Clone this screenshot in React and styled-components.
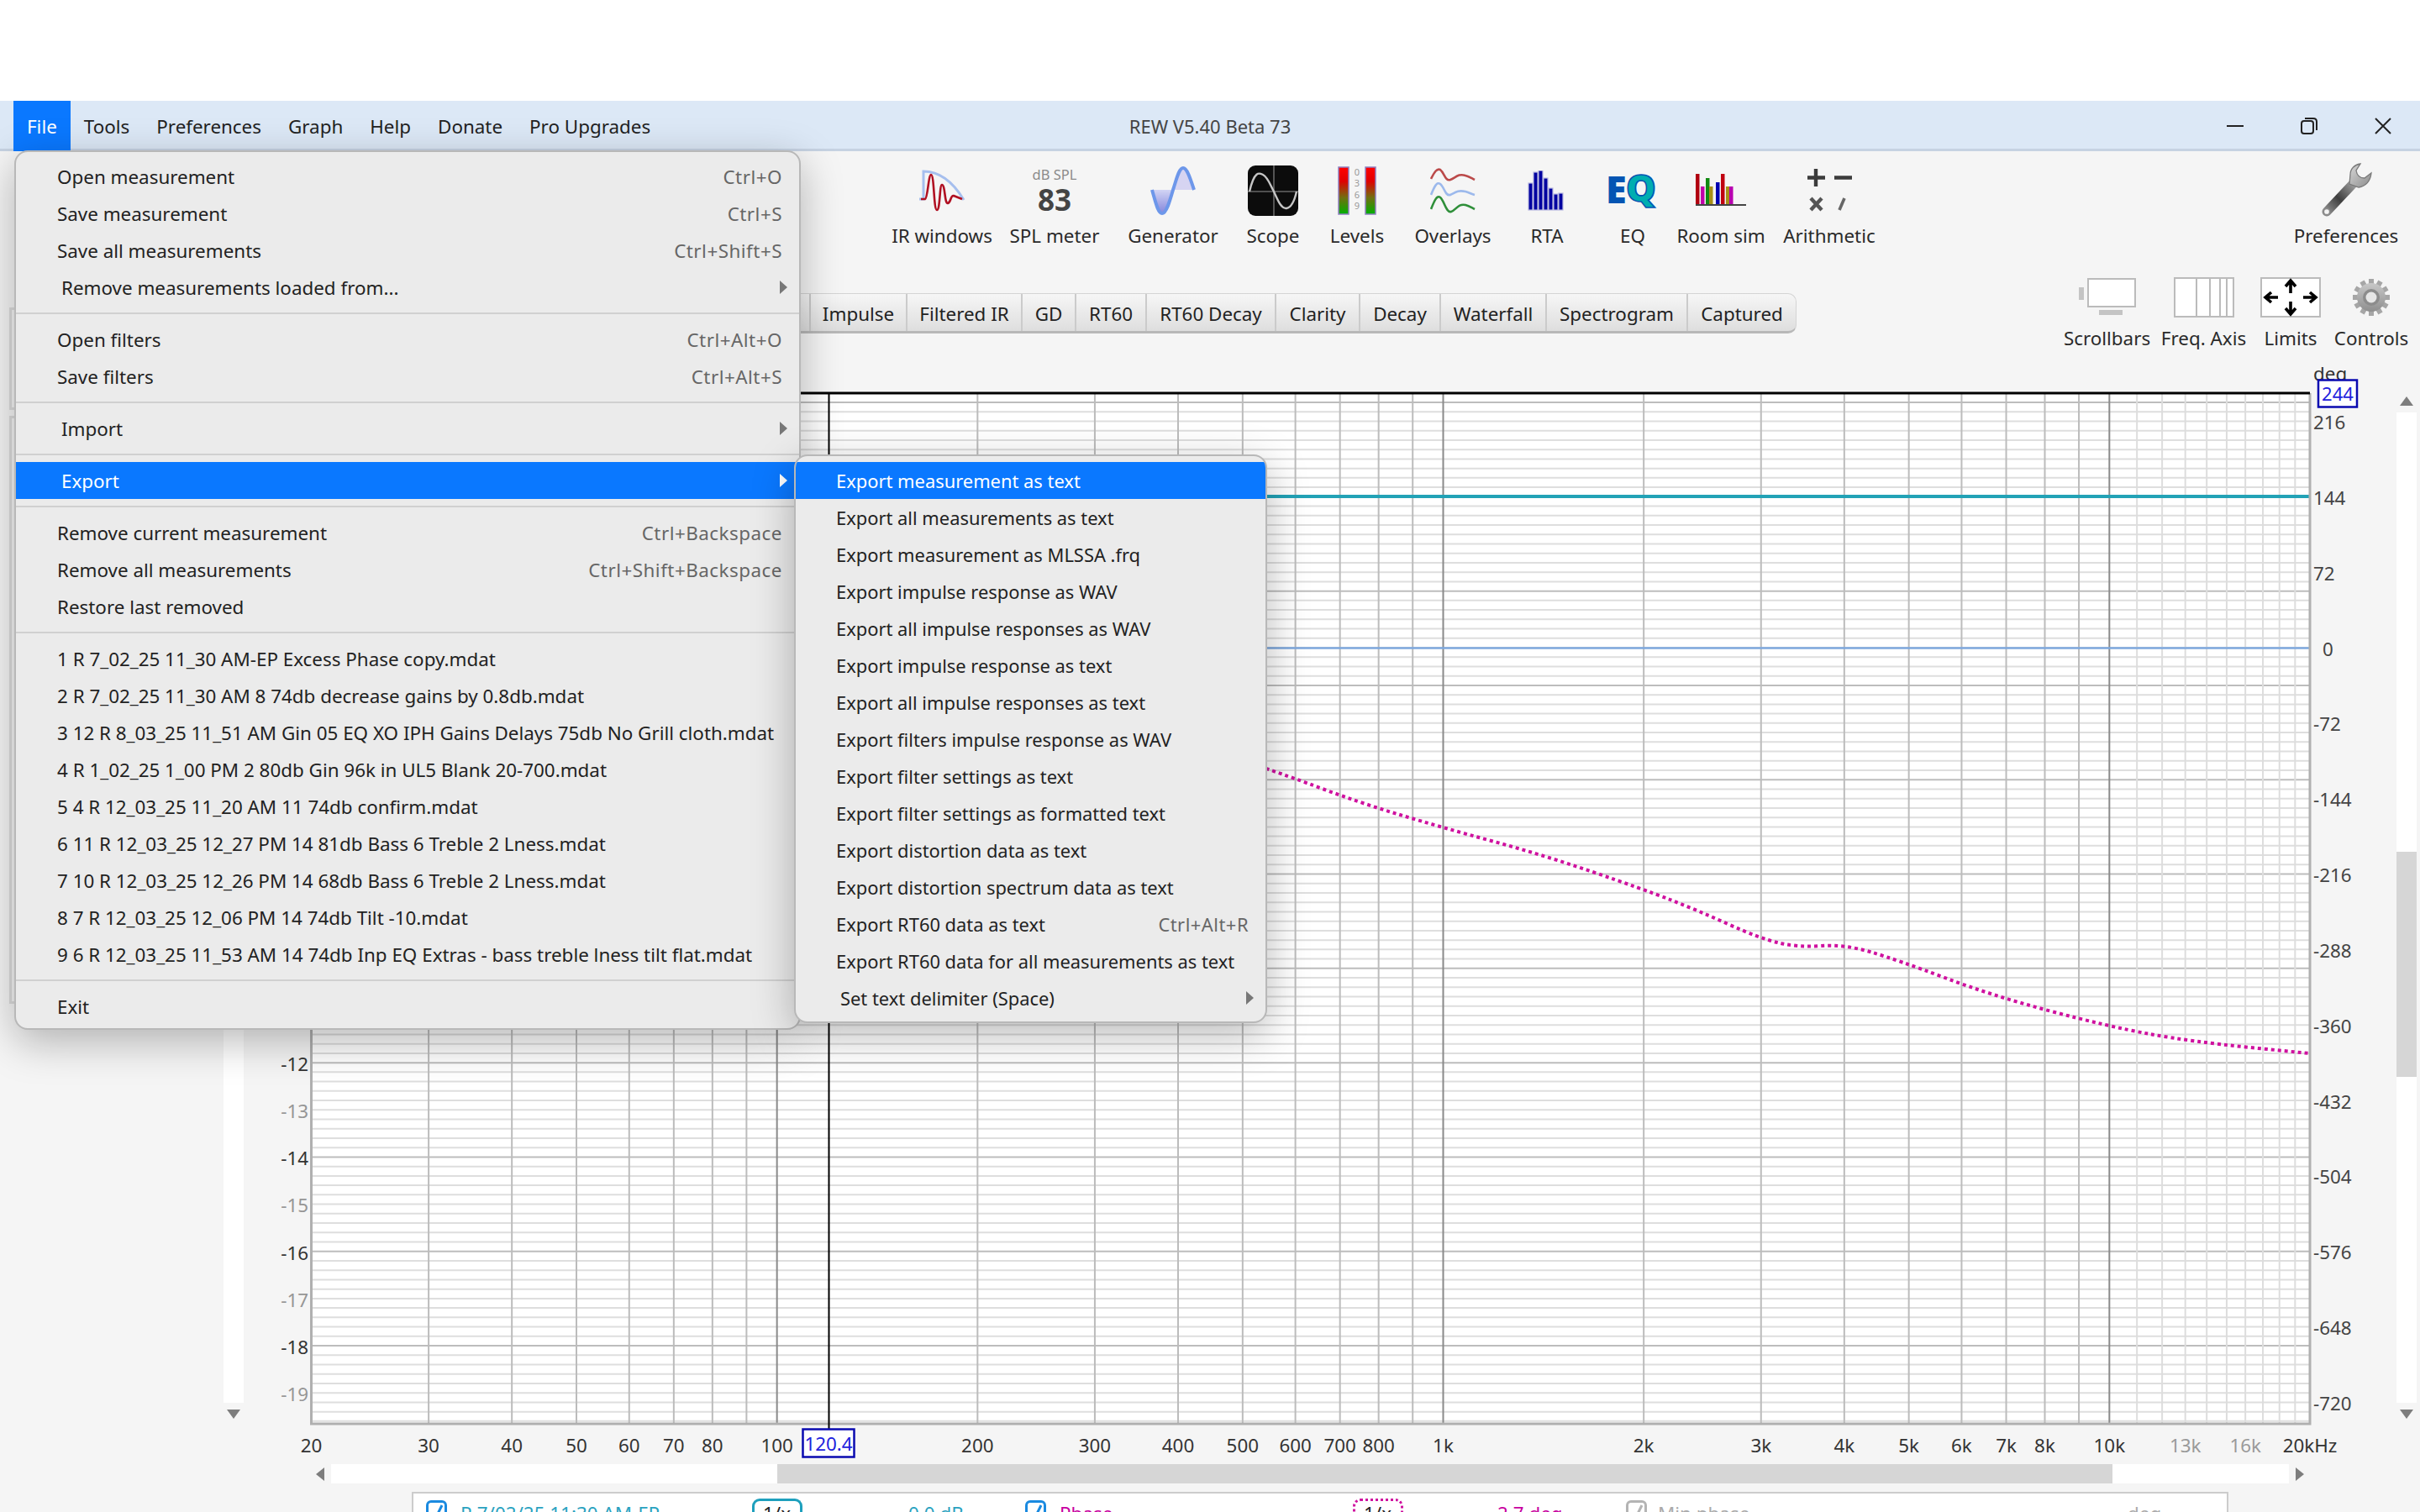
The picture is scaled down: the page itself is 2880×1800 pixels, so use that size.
import React from "react";
import styled, { createGlobalStyle } from "styled-components";

const GlobalStyle = createGlobalStyle`
  html, body { margin: 0; padding: 0; background: #fff; }
  * { box-sizing: border-box; }
`;

const FONT = `"Noto Sans", "Open Sans", sans-serif`;

const Page = styled.div`
  position: relative;
  width: 2880px;
  height: 1800px;
  overflow: hidden;
  display: flex;
  flex-direction: column;
  background: #fff;
  font-family: ${FONT};
  font-size: 22.4px;
  color: #222;
`;
const TopBlank = styled.div`
  height: 120px;
  flex: none;
`;
const TitleBar = styled.div`
  height: 60px;
  flex: none;
  display: grid;
  grid-template-columns: 1fr auto 1fr;
  align-items: center;
  background: #dce8f6;
  border-bottom: 3px solid #c6d2e2;
`;
const MenuBar = styled.div`
  display: flex;
  height: 100%;
  padding-left: 16px;
`;
const MenuBarItem = styled.div`
  display: flex;
  align-items: center;
  height: 60px;
  padding: 0 16px;
  color: ${(p) => (p.$active ? "#fff" : "#222")};
  background: ${(p) => (p.$active ? "#0a78ff" : "transparent")};
`;
const Title = styled.div`
  color: #444;
  font-size: 22px;
`;
const WindowButtons = styled.div`
  display: flex;
  justify-content: flex-end;
  padding-right: 33px;
  gap: 66px;
`;
const Workspace = styled.div`
  flex: 1;
  display: flex;
  background: #f5f5f5;
  min-height: 0;
`;
const Sidebar = styled.div`
  width: 266px;
  flex: none;
  padding: 186px 0 0 11px;
  display: flex;
  flex-direction: column;
  gap: 7px;
`;
const SidePanel = styled.div`
  width: 60px;
  height: ${(p) => p.$h}px;
  border: 3px solid #dcdcdc;
`;
const Main = styled.div`
  flex: 1;
  min-width: 0;
  display: flex;
  flex-direction: column;
`;
const ToolRow = styled.div`
  height: 150px;
  flex: none;
  display: flex;
  padding: 13px 26px 0 790px;
`;
const Tool = styled.div`
  width: ${(p) => p.$w}px;
  flex: none;
  display: flex;
  flex-direction: column;
  align-items: center;
  margin-left: ${(p) => (p.$push ? "auto" : "0")};
`;
const IconSlot = styled.div`
  height: ${(p) => p.$h}px;
  display: flex;
  flex-direction: column;
  align-items: center;
  justify-content: center;
`;
const ToolLabel = styled.div`
  height: 32px;
  line-height: 32px;
  margin-top: ${(p) => p.$gap}px;
  white-space: nowrap;
  color: #2a2a2a;
`;
const SplCaption = styled.div`
  color: #8a8a8a;
  font-size: 16.5px;
  line-height: 18px;
`;
const SplValue = styled.div`
  margin-top: 3px;
  color: #444;
  font-size: 35px;
  font-weight: 700;
  line-height: 36px;
`;
const SecondRow = styled.div`
  height: 110px;
  flex: none;
  display: flex;
  align-items: flex-start;
  padding-right: 8px;
`;
const TabStrip = styled.div`
  display: flex;
  height: 48px;
  margin: 19px 0 0 514px;
  border-radius: 0 10px 10px 0;
  border: 1px solid #d4d4d4;
  border-bottom: 3px solid #b8b8b8;
  border-left: 0;
  background: linear-gradient(#f6f6f6, #dedede);
`;
const TabItem = styled.div`
  width: ${(p) => p.$w}px;
  display: flex;
  align-items: center;
  justify-content: center;
  padding-top: 3px;
  white-space: nowrap;
  border-right: ${(p) => (p.$last ? "0" : "2px solid #cbcbcb")};
`;
const SmallTools = styled.div`
  margin-left: auto;
  display: flex;
`;
const ChartRow = styled.div`
  height: 1300px;
  flex: none;
  display: flex;
`;
const VScroll = styled.div`
  width: 24px;
  flex: none;
  display: flex;
  flex-direction: column;
`;
const ArrowSlot = styled.div`
  height: ${(p) => p.$h}px;
  flex: none;
  display: flex;
  justify-content: center;
  align-items: ${(p) => (p.$down ? "flex-start" : "flex-end")};
  padding: 8px 0;
`;
const TriangleV = styled.div`
  width: 0;
  height: 0;
  border-left: 8px solid transparent;
  border-right: 8px solid transparent;
  ${(p) => (p.$down ? "border-top: 11px solid #7d7d7d;" : "border-bottom: 11px solid #7d7d7d;")}
`;
const VTrack = styled.div`
  flex: 1;
  background: #fff;
`;
const VThumb = styled.div`
  margin-top: ${(p) => p.$top}px;
  height: ${(p) => p.$h}px;
  background: #d6d6d6;
`;
const ChartSvg = styled.svg`
  display: block;
  flex: none;
  overflow: visible;
  font-family: ${FONT};
  font-size: 22.4px;
`;
const EqSvg = styled.svg`
  overflow: visible;
  font-family: ${FONT};
  font-weight: 900;
  font-size: 45px;
`;
const HScrollRow = styled.div`
  height: 36px;
  flex: none;
  display: flex;
  align-items: flex-start;
  padding: 3px 0 0 110px;
  gap: 8px;
`;
const TriangleH = styled.div`
  width: 0;
  height: 0;
  margin-top: 4px;
  border-top: 8px solid transparent;
  border-bottom: 8px solid transparent;
  ${(p) => (p.$right ? "border-left: 10px solid #7d7d7d;" : "border-right: 10px solid #7d7d7d;")}
`;
const HTrack = styled.div`
  width: 2330px;
  height: 23px;
  background: #fff;
`;
const HThumb = styled.div`
  width: 1589px;
  height: 23px;
  margin-left: 531px;
  background: #d6d6d6;
`;
const BottomPanel = styled.div`
  flex: 1;
  width: 2162px;
  margin-left: 224px;
  display: flex;
  align-items: flex-start;
  overflow: hidden;
  padding: 8px 0 0 15px;
  background: #fff;
  border: 2px solid #cccccc;
  border-bottom: 0;
`;
const LegendCheck = styled.div`
  width: ${(p) => p.$w}px;
  flex: none;
  display: flex;
  align-items: flex-start;
  gap: ${(p) => p.$gap}px;
  color: ${(p) => p.$color};
  white-space: nowrap;
`;
const CheckBox = styled.div`
  width: 25px;
  height: 30px;
  flex: none;
  border: 3px solid ${(p) => p.$color};
  border-radius: 6px;
  background: #fff;
`;
const LegendText = styled.div`
  line-height: 32px;
`;
const LegendValue = styled.div`
  width: ${(p) => p.$w}px;
  flex: none;
  padding-left: ${(p) => p.$pad}px;
  color: ${(p) => p.$color};
  line-height: 32px;
  white-space: nowrap;
`;
const SmoothSlot = styled.div`
  position: relative;
  width: ${(p) => p.$w}px;
  flex: none;
  margin-top: -2px;
  display: flex;
  justify-content: center;
  &::before {
    content: "";
    position: absolute;
    left: 0;
    right: 0;
    top: 16px;
    border-top: 3px ${(p) => p.$line} ${(p) => p.$color};
  }
`;
const SmoothTab = styled.div`
  position: relative;
  width: 60px;
  height: 40px;
  border: 3px ${(p) => p.$line} ${(p) => p.$color};
  border-bottom: 0;
  border-radius: 9px 9px 0 0;
  background: #fff;
  text-align: center;
  line-height: 30px;
  color: #222;
`;
const MenuPanel = styled.div`
  position: absolute;
  left: ${(p) => p.$x}px;
  top: ${(p) => p.$y}px;
  width: ${(p) => p.$w}px;
  height: ${(p) => p.$h}px;
  padding-top: ${(p) => p.$top}px;
  font-size: ${(p) => p.$size}px;
  background: #ebebeb;
  border: 2px solid #b8b8b8;
  border-radius: 16px;
  box-shadow: 0 14px 50px rgba(0, 0, 0, 0.28);
  overflow: hidden;
`;
const MenuItem = styled.div`
  position: relative;
  height: 44px;
  display: flex;
  align-items: center;
  justify-content: space-between;
  padding: 0 20px 0 ${(p) => p.$left}px;
  white-space: nowrap;
  color: ${(p) => (p.$active ? "#fff" : "#222")};
  background: ${(p) => (p.$active ? "#0a78ff" : "transparent")};
`;
const Shortcut = styled.span`
  color: #666;
  letter-spacing: 0.5px;
`;
const MenuArrow = styled.span`
  position: absolute;
  right: 14px;
  top: 14px;
  width: 0;
  height: 0;
  border-top: 8px solid transparent;
  border-bottom: 8px solid transparent;
  border-left: 9px solid ${(p) => (p.$active ? "#fff" : "#777")};
`;
const MenuSeparator = styled.div`
  height: 2px;
  margin: 8px 0;
  background: #d0d0d0;
`;

const IrIcon = () => (
  <svg width="56" height="54" viewBox="0 0 56 54" fill="none">
    <path d="M1 37H6V4C26 4 42 18 54 38" stroke="#a6bfee" strokeWidth="3" />
    <path d="M3 37H8C11 36 12 8 15 8C19 8 18 50 22 50C26 50 25 20 28 20C32 20 31 43 35 42C39 41 38 32 42 33L52 37" stroke="#b01022" strokeWidth="2.6" />
  </svg>
);
const GeneratorIcon = () => (
  <svg width="54" height="58" viewBox="0 0 54 58" fill="none">
    <defs>
      <linearGradient id="genLow" x1="0" y1="0" x2="0" y2="1">
        <stop offset="0" stopColor="#d2d4f4" />
        <stop offset="1" stopColor="#8486dc" />
      </linearGradient>
    </defs>
    <path d="M2 28H27C23 42 19 56 14 56C9 56 6 42 2 28Z" fill="url(#genLow)" />
    <path d="M27 28H52C48 16 44 2 39 2C34 2 31 16 27 28Z" fill="#d6d4f2" />
    <path d="M2 28C6 42 9 56 14 56C19 56 23 42 27 28C31 16 34 2 39 2C44 2 48 16 52 28" stroke="#6d97ea" strokeWidth="4" />
  </svg>
);
const ScopeIcon = () => (
  <svg width="60" height="60" viewBox="0 0 60 60" fill="none">
    <rect width="60" height="60" rx="9" fill="#0c0c0c" />
    <path d="M0 31H60M31 0V60" stroke="#666" strokeWidth="1.6" />
    <path d="M2 31C8 5 14 9 18 11C24 14 27 24 31 31C36 42 40 52 46 51C52 50 56 40 58 31" stroke="#c6c6c6" strokeWidth="2.4" />
  </svg>
);
const LevelsIcon = () => (
  <svg width="46" height="58" viewBox="0 0 46 58" fontFamily={FONT}>
    <defs>
      <linearGradient id="lvl" x1="0" y1="0" x2="0" y2="1">
        <stop offset="0" stopColor="#ff0000" />
        <stop offset="0.3" stopColor="#e00000" />
        <stop offset="0.65" stopColor="#707010" />
        <stop offset="1" stopColor="#00b000" />
      </linearGradient>
    </defs>
    <rect x="1" y="1" width="12" height="56" fill="url(#lvl)" stroke="#8f7fc0" strokeWidth="1.5" />
    <rect x="33" y="1" width="12" height="56" fill="url(#lvl)" stroke="#8f7fc0" strokeWidth="1.5" />
    <g fill="#999" fontSize="11" textAnchor="middle">
      <text x="23" y="11">0</text>
      <text x="23" y="24">3</text>
      <text x="23" y="38">6</text>
      <text x="23" y="51">9</text>
    </g>
  </svg>
);
const OverlaysIcon = () => (
  <svg width="54" height="56" viewBox="0 0 54 56" fill="none" strokeWidth="2.6">
    <path d="M1 14C5 6 8 1 12 3C17 7 18 17 24 15C30 13 33 7 42 10C46 11 49 13 53 15" stroke="#bb4a4a" />
    <path d="M1 33C5 23 8 17 12 20C17 24 18 35 24 33C30 30 33 27 42 29C46 30 49 32 53 33" stroke="#9cb9ec" />
    <path d="M1 50C5 40 8 33 12 36C17 40 19 55 25 53C31 51 33 43 42 45C46 46 49 48 53 50" stroke="#2f8f3a" />
  </svg>
);
const RtaIcon = () => (
  <svg width="46" height="48" viewBox="0 0 46 48">
    {[15, 2, 0, 9, 21, 28, 27].map((top, i) => (
      <rect key={i} x={1 + i * 6} y={top} width="5" height={47 - top} fill="#0000a0" stroke="#b8b8e0" strokeWidth="1.2" />
    ))}
  </svg>
);
const EqIcon = () => (
  <EqSvg width="54" height="60" viewBox="0 -12 54 60">
    <text x="-5" y="33" fill="#0455b3">E</text>
    <text x="19" y="31" fill="#00adb0" stroke="#0455b3" strokeWidth="1.6">Q</text>
  </EqSvg>
);
const RoomSimIcon = () => (
  <svg width="60" height="40" viewBox="0 0 60 40">
    {[
      [0, 0, "#b00010"], [6, 15, "#c000a8"], [12, 5, "#108a10"], [16, 15, "#a89018"],
      [24, 10, "#0000b0"], [30, 0, "#c00010"], [36, 15, "#a89018"], [40, 15, "#b800b0"],
    ].map(([x, y, c]) => (
      <rect key={x} x={x} y={y} width="4.5" height={37 - y} fill={c} />
    ))}
    <rect y="36" width="60" height="2" fill="#444" />
  </svg>
);
const ArithmeticIcon = () => (
  <svg width="54" height="54" viewBox="0 0 54 54" fill="none">
    <path d="M11 1V22M1 11.5H22M33 11.5H54" stroke="#3c3c3c" strokeWidth="4.4" />
    <path d="M5 36L18 50M18 36L5 50" stroke="#555" strokeWidth="4.4" />
    <path d="M45 36L39 50" stroke="#666" strokeWidth="3.6" />
  </svg>
);
const WrenchIcon = () => (
  <svg width="62" height="66" viewBox="0 0 62 66" fill="none">
    <defs>
      <linearGradient id="wrench" x1="0" y1="1" x2="1" y2="0">
        <stop offset="0" stopColor="#8c8c8c" />
        <stop offset="0.45" stopColor="#3e3e3e" />
        <stop offset="1" stopColor="#a0a0a0" />
      </linearGradient>
      <linearGradient id="wrenchHead" x1="0" y1="0" x2="1" y2="1">
        <stop offset="0" stopColor="#d8d8d8" />
        <stop offset="1" stopColor="#8c8c8c" />
      </linearGradient>
    </defs>
    <path d="M8 58L40 24" stroke="url(#wrench)" strokeWidth="11" strokeLinecap="round" />
    <circle cx="8" cy="58" r="3.6" fill="#f5f5f5" stroke="#8a8a8a" strokeWidth="1.5" />
    <path d="M48 1C41 2 36 7 36 14L35 25L46 29C54 28 60 22 61 12L53 18C48 18 44 15 43 9Z" fill="url(#wrenchHead)" stroke="#7a7a7a" strokeWidth="1.3" />
  </svg>
);
const ScrollbarsIcon = () => (
  <svg width="68" height="46" viewBox="0 0 68 46">
    <rect x="11" y="1" width="56" height="33" fill="#fff" stroke="#bbb" strokeWidth="2" />
    <rect x="0" y="11" width="6" height="15" fill="#c4c4c4" />
    <rect x="24" y="38" width="28" height="6" fill="#c4c4c4" />
  </svg>
);
const FreqAxisIcon = () => (
  <svg width="72" height="48" viewBox="0 0 72 48" fill="#fff" stroke="#bbb" strokeWidth="2">
    <rect x="1" y="1" width="70" height="46" />
    <path d="M27 1V47M43 1V47M55 1V47M63 1V47" />
  </svg>
);
const LimitsIcon = () => (
  <svg width="72" height="48" viewBox="0 0 72 48">
    <rect x="1" y="1" width="70" height="46" fill="#fff" stroke="#bbb" strokeWidth="2" />
    <path d="M36 19V6M30 11L36 4L42 11" fill="none" stroke="#000" strokeWidth="3.6" />
    <path d="M36 29V42M30 37L36 44L42 37" fill="none" stroke="#000" strokeWidth="3.6" />
    <path d="M21 24H8M13 18L6 24L13 30" fill="none" stroke="#000" strokeWidth="3.6" />
    <path d="M51 24H64M59 18L66 24L59 30" fill="none" stroke="#000" strokeWidth="3.6" />
  </svg>
);
const GearIcon = () => (
  <svg width="44" height="44" viewBox="0 0 44 44">
    <defs>
      <linearGradient id="gear" x1="0" y1="0" x2="0" y2="1">
        <stop offset="0" stopColor="#c8c8c8" />
        <stop offset="1" stopColor="#8e8e8e" />
      </linearGradient>
    </defs>
    {Array.from({ length: 12 }).map((_, i) => (
      <rect key={i} x="19" y="0" width="6" height="8" fill="#a6a6a6" transform={`rotate(${i * 30} 22 22)`} />
    ))}
    <circle cx="22" cy="22" r="17" fill="url(#gear)" />
    <circle cx="22" cy="22" r="10" fill="#8c8c8c" />
    <circle cx="22" cy="22" r="6.5" fill="#e6e6e6" />
  </svg>
);
const MinimizeIcon = () => (
  <svg width="22" height="22" viewBox="0 0 22 22"><path d="M1 11H21" stroke="#222" strokeWidth="2" /></svg>
);
const RestoreIcon = () => (
  <svg width="22" height="22" viewBox="0 0 22 22" fill="none" stroke="#222" strokeWidth="2">
    <rect x="2" y="5" width="14" height="15" rx="3" />
    <path d="M6 2H16C19 2 20 4 20 6V16" />
  </svg>
);
const CloseIcon = () => (
  <svg width="22" height="22" viewBox="0 0 22 22"><path d="M2 2L20 20M20 2L2 20" stroke="#222" strokeWidth="2" /></svg>
);
const Tick = ({ color }) => (
  <svg width="19" height="24" viewBox="0 0 19 24" fill="none"><path d="M3 12L8 19L16 3" stroke={color} strokeWidth="3" /></svg>
);

const menuBarItems = ["File", "Tools", "Preferences", "Graph", "Help", "Donate", "Pro Upgrades"];

const tools = [
  { w: 130, label: "IR windows", icon: <IrIcon /> },
  {
    w: 138,
    label: "SPL meter",
    icon: (
      <>
        <SplCaption>dB SPL</SplCaption>
        <SplValue>83</SplValue>
      </>
    ),
  },
  { w: 144, label: "Generator", icon: <GeneratorIcon /> },
  { w: 94, label: "Scope", icon: <ScopeIcon /> },
  { w: 106, label: "Levels", icon: <LevelsIcon /> },
  { w: 122, label: "Overlays", icon: <OverlaysIcon /> },
  { w: 102, label: "RTA", icon: <RtaIcon /> },
  { w: 102, label: "EQ", icon: <EqIcon /> },
  { w: 108, label: "Room sim", icon: <RoomSimIcon /> },
  { w: 150, label: "Arithmetic", icon: <ArithmeticIcon /> },
];

const tabs = [
  ["Phase", 185], ["Impulse", 115], ["Filtered IR", 137], ["GD", 64], ["RT60", 84], ["RT60 Decay", 154],
  ["Clarity", 100], ["Decay", 96], ["Waterfall", 126], ["Spectrogram", 168], ["Captured", 128],
];

const smallTools = [
  { w: 115, label: "Scrollbars", icon: <ScrollbarsIcon /> },
  { w: 115, label: "Freq. Axis", icon: <FreqAxisIcon /> },
  { w: 92, label: "Limits", icon: <LimitsIcon /> },
  { w: 100, label: "Controls", icon: <GearIcon /> },
];

const fileMenu = [
  { t: "Open measurement", k: "Ctrl+O" },
  { t: "Save measurement", k: "Ctrl+S" },
  { t: "Save all measurements", k: "Ctrl+Shift+S" },
  { t: "Remove measurements loaded from...", sub: true },
  null,
  { t: "Open filters", k: "Ctrl+Alt+O" },
  { t: "Save filters", k: "Ctrl+Alt+S" },
  null,
  { t: "Import", sub: true },
  null,
  { t: "Export", sub: true, active: true },
  null,
  { t: "Remove current measurement", k: "Ctrl+Backspace" },
  { t: "Remove all measurements", k: "Ctrl+Shift+Backspace" },
  { t: "Restore last removed" },
  null,
  { t: "1 R 7_02_25 11_30 AM-EP Excess Phase copy.mdat" },
  { t: "2 R 7_02_25 11_30 AM 8 74db decrease gains by 0.8db.mdat" },
  { t: "3 12 R 8_03_25 11_51 AM Gin 05 EQ XO IPH Gains Delays 75db No Grill cloth.mdat" },
  { t: "4 R 1_02_25 1_00 PM 2 80db Gin 96k in UL5 Blank 20-700.mdat" },
  { t: "5 4 R 12_03_25 11_20 AM 11 74db confirm.mdat" },
  { t: "6 11 R 12_03_25 12_27 PM 14 81db Bass 6 Treble 2 Lness.mdat" },
  { t: "7 10 R 12_03_25 12_26 PM 14 68db Bass 6 Treble 2 Lness.mdat" },
  { t: "8 7 R 12_03_25 12_06 PM 14 74db Tilt -10.mdat" },
  { t: "9 6 R 12_03_25 11_53 AM 14 74db Inp EQ Extras - bass treble lness tilt flat.mdat" },
  null,
  { t: "Exit" },
];

const exportMenu = [
  { t: "Export measurement as text", active: true },
  { t: "Export all measurements as text" },
  { t: "Export measurement as MLSSA .frq" },
  { t: "Export impulse response as WAV" },
  { t: "Export all impulse responses as WAV" },
  { t: "Export impulse response as text" },
  { t: "Export all impulse responses as text" },
  { t: "Export filters impulse response as WAV" },
  { t: "Export filter settings as text" },
  { t: "Export filter settings as formatted text" },
  { t: "Export distortion data as text" },
  { t: "Export distortion spectrum data as text" },
  { t: "Export RT60 data as text", k: "Ctrl+Alt+R" },
  { t: "Export RT60 data for all measurements as text" },
  { t: "Set text delimiter (Space)", sub: true },
];

const PLOT = { left: 370.5, right: 2749, top: 468, bottom: 1695 };
const freqX = (f) => PLOT.left + (Math.log10(f / 20) / 3) * (PLOT.right - PLOT.left);

const freqLines = [];
[10, 100, 1000].forEach((decade) => {
  for (let n = 1; n < 10; n++) {
    const f = n * decade;
    if (f >= 20) freqLines.push({ f, color: n === 1 ? "#8a8a8a" : "#bcbcbc" });
  }
});
freqLines.push({ f: 10000, color: "#8a8a8a" });
for (let f = 11000; f < 20000; f += 1000) freqLines.push({ f, color: "#dddddd" });

const freqLabels = [
  [20, "20"], [30, "30"], [40, "40"], [50, "50"], [60, "60"], [70, "70"], [80, "80"], [100, "100"],
  [200, "200"], [300, "300"], [400, "400"], [500, "500"], [600, "600"], [700, "700"], [800, "800"],
  [1000, "1k"], [2000, "2k"], [3000, "3k"], [4000, "4k"], [5000, "5k"], [6000, "6k"], [7000, "7k"], [8000, "8k"],
  [10000, "10k"], [13000, "13k", true], [16000, "16k", true], [20000, "20kHz"],
];

const hLines = [];
for (let i = 0; 467.8 + i * 11.23 < PLOT.bottom; i++) {
  hLines.push({ y: 467.8 + i * 11.23, major: (i - 1) % 10 === 0 });
}

const dbLabels = [-12, -13, -14, -15, -16, -17, -18, -19];
const degLabels = [216, 144, 72, 0, -72, -144, -216, -288, -360, -432, -504, -576, -648, -720];

const phasePoints = [
  [1400, 880], [1510, 915], [1616, 955], [1716, 985], [1837, 1018], [1954, 1058], [2021, 1084],
  [2094, 1117], [2140, 1128], [2195, 1124], [2259, 1143], [2370, 1185], [2509, 1222], [2608, 1240], [2748, 1254],
];
// smooth the traced points with quadratic segments through the midpoints
const phasePath = phasePoints.reduce((d, [x, y], i, a) => {
  if (i === 0) return `M${x} ${y}`;
  if (i === a.length - 1) return `${d} L${x} ${y}`;
  const [nx, ny] = a[i + 1];
  return `${d} Q${x} ${y} ${(x + nx) / 2} ${(y + ny) / 2}`;
}, "");

const Chart = () => (
  <ChartSvg width="2562" height="1300" viewBox="290 440 2562 1300">
    <rect x={PLOT.left} y={PLOT.top} width={PLOT.right - PLOT.left} height={PLOT.bottom - PLOT.top} fill="#fff" />
    {hLines.map(({ y, major }) => (
      <line key={y} x1={PLOT.left} x2={PLOT.right} y1={y} y2={y} stroke={major ? "#bdbdbd" : "#dedede"} strokeWidth="2" />
    ))}
    {freqLines.map(({ f, color }) => (
      <line key={f} x1={freqX(f)} x2={freqX(f)} y1={PLOT.top} y2={PLOT.bottom} stroke={color} strokeWidth="2" />
    ))}
    <line x1={PLOT.left} x2={PLOT.right} y1="591" y2="591" stroke="#22a2b6" strokeWidth="4" />
    <line x1={PLOT.left} x2={PLOT.right} y1="771.5" y2="771.5" stroke="#7ea8de" strokeWidth="2.5" />
    <path d={phasePath} fill="none" stroke="#cf119f" strokeWidth="4" strokeDasharray="4 4" />
    <path d={`M${PLOT.left} ${PLOT.top}V${PLOT.bottom}H${PLOT.right}V${PLOT.top}`} fill="none" stroke="#b0b0b0" strokeWidth="3" />
    <line x1={PLOT.left} x2={PLOT.right} y1={PLOT.top} y2={PLOT.top} stroke="#000" strokeWidth="3" />
    <line x1="986.5" x2="986.5" y1={PLOT.top} y2="1701" stroke="#000" strokeWidth="2" />

    {dbLabels.map((v, i) => (
      <text key={v} x="367" y={1266 + i * 56.15 + 9} textAnchor="end" fill={i % 2 ? "#969696" : "#333"}>{v}</text>
    ))}
    {degLabels.map((v, i) => (
      <text key={v} x={v === 0 ? 2764 : 2753} y={501 + i * 89.84 + 10} fill="#444">{v}</text>
    ))}
    <text x="2753" y="453" fill="#333">deg</text>
    <rect x="2759" y="452.5" width="46" height="32" fill="#fff" stroke="#0a0ab0" strokeWidth="2.5" />
    <text x="2782" y="477" textAnchor="middle" fill="#2222dd" fontSize="22">244</text>

    {freqLabels.map(([f, t, faded]) => (
      <text key={f} x={freqX(f)} y="1729" textAnchor="middle" fill={faded ? "#9a9a9a" : "#333"}>{t}</text>
    ))}
    <rect x="955.5" y="1701.5" width="61" height="33" fill="#fff" stroke="#0a0ab0" strokeWidth="2.5" />
    <text x="986" y="1727" textAnchor="middle" fill="#2222dd">120.4</text>
  </ChartSvg>
);

const renderMenu = (items, left, subLeft) =>
  items.map((item, i) =>
    item === null ? (
      <MenuSeparator key={i} />
    ) : (
      <MenuItem key={i} $left={item.sub ? subLeft : left} $active={item.active}>
        <span>{item.t}</span>
        {item.k && <Shortcut>{item.k}</Shortcut>}
        {item.sub && <MenuArrow $active={item.active} />}
      </MenuItem>
    )
  );

const App = () => (
  <Page>
    <GlobalStyle />
    <TopBlank />
    <TitleBar>
      <MenuBar>
        {menuBarItems.map((name, i) => (
          <MenuBarItem key={name} $active={i === 0}>{name}</MenuBarItem>
        ))}
      </MenuBar>
      <Title>REW V5.40 Beta 73</Title>
      <WindowButtons>
        <MinimizeIcon />
        <RestoreIcon />
        <CloseIcon />
      </WindowButtons>
    </TitleBar>
    <Workspace>
      <Sidebar>
        <SidePanel $h={122} />
        <SidePanel $h={700} />
      </Sidebar>
      <Main>
        <ToolRow>
          {tools.map((tool) => (
            <Tool key={tool.label} $w={tool.w}>
              <IconSlot $h={68}>{tool.icon}</IconSlot>
              <ToolLabel $gap={4}>{tool.label}</ToolLabel>
            </Tool>
          ))}
          <Tool $w={124} $push>
            <IconSlot $h={68}><WrenchIcon /></IconSlot>
            <ToolLabel $gap={4}>Preferences</ToolLabel>
          </Tool>
        </ToolRow>
        <SecondRow>
          <TabStrip>
            {tabs.map(([name, w], i) => (
              <TabItem key={name} $w={w} $last={i === tabs.length - 1}>{name}</TabItem>
            ))}
          </TabStrip>
          <SmallTools>
            {smallTools.map((tool) => (
              <Tool key={tool.label} $w={tool.w}>
                <IconSlot $h={48}>{tool.icon}</IconSlot>
                <ToolLabel $gap={9}>{tool.label}</ToolLabel>
              </Tool>
            ))}
          </SmallTools>
        </SecondRow>
        <ChartRow>
          <VScroll>
            <ArrowSlot $h={51}><TriangleV /></ArrowSlot>
            <VTrack />
            <ArrowSlot $h={70} $down><TriangleV $down /></ArrowSlot>
          </VScroll>
          <Chart />
          <VScroll>
            <ArrowSlot $h={51}><TriangleV /></ArrowSlot>
            <VTrack>
              <VThumb $top={523} $h={268} />
            </VTrack>
            <ArrowSlot $h={70} $down><TriangleV $down /></ArrowSlot>
          </VScroll>
        </ChartRow>
        <HScrollRow>
          <TriangleH />
          <HTrack><HThumb /></HTrack>
          <TriangleH $right />
        </HScrollRow>
        <BottomPanel>
          <LegendCheck $w={367} $gap={16} $color="#2aa2bf">
            <CheckBox $color="#1a8ae0"><Tick color="#1a8ae0" /></CheckBox>
            <LegendText>R 7/02/25 11:30 AM-EP</LegendText>
          </LegendCheck>
          <SmoothSlot $w={101} $line="solid" $color="#1ea0bd">
            <SmoothTab $line="solid" $color="#1ea0bd">1/x</SmoothTab>
          </SmoothSlot>
          <LegendValue $w={245} $pad={106} $color="#2aa2bf">0.0 dB</LegendValue>
          <LegendCheck $w={371} $gap={16} $color="#c800a0">
            <CheckBox $color="#1a8ae0"><Tick color="#1a8ae0" /></CheckBox>
            <LegendText>Phase</LegendText>
          </LegendCheck>
          <SmoothSlot $w={97} $line="dotted" $color="#cf119f">
            <SmoothTab $line="dotted" $color="#cf119f">1/x</SmoothTab>
          </SmoothSlot>
          <LegendValue $w={247} $pad={94} $color="#c800a0">2.7 deg</LegendValue>
          <LegendCheck $w={597} $gap={13} $color="#aaaaaa">
            <CheckBox $color="#b4b4b4"><Tick color="#b4b4b4" /></CheckBox>
            <LegendText>Min phase</LegendText>
          </LegendCheck>
          <LegendValue $w={60} $pad={0} $color="#aaaaaa">deg</LegendValue>
        </BottomPanel>
      </Main>
    </Workspace>
    <MenuPanel $x={17} $y={179} $w={936} $h={1047} $top={7} $size={22.4}>
      {renderMenu(fileMenu, 49, 54)}
    </MenuPanel>
    <MenuPanel $x={945} $y={541} $w={563} $h={677} $top={7} $size={21.9}>
      {renderMenu(exportMenu, 48, 53)}
    </MenuPanel>
  </Page>
);

export default App;
